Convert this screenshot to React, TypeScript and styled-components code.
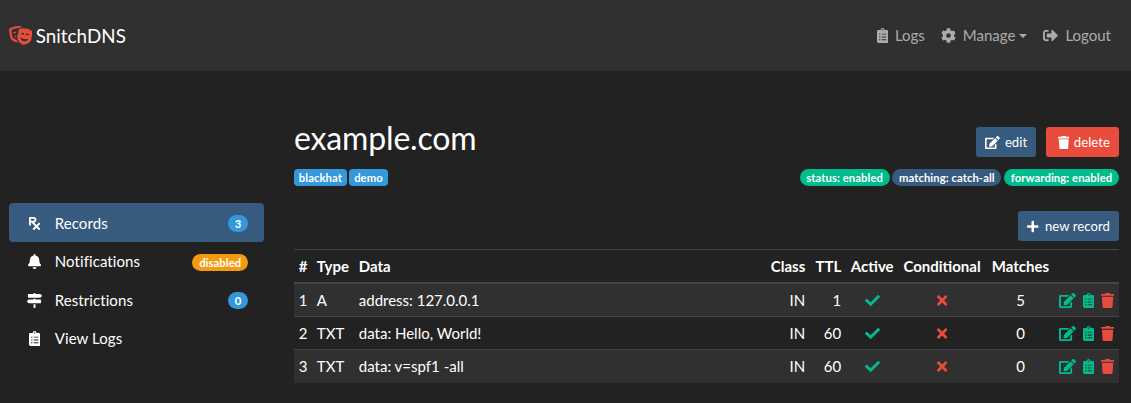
import React from "react";
import styled, { createGlobalStyle } from "styled-components";
import type { IconType } from "react-icons";
import {
  FaTheaterMasks, FaClipboardList, FaCog, FaSignOutAlt, FaPrescription, FaBell,
  FaMapSigns, FaEdit, FaTrash, FaPlus, FaCheck, FaTimes,
} from "react-icons/fa";

const colors = {
  primary: "#375a7f",
  info: "#3498db",
  success: "#00bc8c",
  warning: "#f39c12",
  danger: "#e74c3c",
};
type Tone = keyof typeof colors;

const GlobalStyle = createGlobalStyle`
  *, *::before, *::after { box-sizing: border-box; }
  body {
    margin: 0;
    background: #222;
    color: #fff;
    font: 400 15px/1.5 Lato, "Liberation Sans", sans-serif;
  }
  svg { display: block; flex: none; }
`;

const Page = styled.div`
  min-height: 403px;
  overflow: hidden;
`;

const Navbar = styled.header`
  display: flex;
  align-items: center;
  justify-content: space-between;
  height: 71px;
  padding: 0 20px 0 9px;
  background: #303030;
`;

const Brand = styled.a`
  display: flex;
  align-items: center;
  gap: 3.3px;
  padding-top: 1px;
  font-size: 18.75px;
  letter-spacing: 0.06px;
  svg { color: #e74c3c; margin-top: -1px; }
`;

const Nav = styled.nav`
  display: flex;
  align-items: center;
  gap: 16px;
`;

const NavLink = styled.a<{ $gap: number }>`
  display: flex;
  align-items: center;
  gap: ${(p) => p.$gap}px;
  color: rgba(255, 255, 255, 0.6);
`;

const Caret = styled.span`
  margin-left: -3px;
  border: 4.5px solid transparent;
  border-top-color: currentColor;
  border-bottom: 0;
`;

const Body = styled.div`
  display: flex;
  gap: 30px;
  padding: 0 12px 0 9px;
`;

const Sidebar = styled.aside`
  width: 255px;
  padding-top: 132px;
`;

const SideItem = styled.a<{ $active?: boolean }>`
  display: flex;
  align-items: center;
  height: 38.5px;
  padding: 0 16px;
  border-radius: 4px;
  background: ${(p) => (p.$active ? colors.primary : "transparent")};
`;

const SideIcon = styled.span`
  display: flex;
  justify-content: center;
  width: 18.75px;
  margin-right: 11px;
  padding-top: 1.5px;
`;

const SideLabel = styled.span`
  flex: 1;
  padding-top: 1px;
  letter-spacing: 0.08px;
`;

const Badge = styled.span<{ $tone: Tone; $pill?: boolean }>`
  display: inline-flex;
  align-items: center;
  height: 17px;
  padding: 0 ${(p) => (p.$pill ? "0.6em" : "0.43em")};
  border-radius: ${(p) => (p.$pill ? "10rem" : "4px")};
  background: ${(p) => colors[p.$tone]};
  font-size: 11.25px;
  font-weight: 700;
  letter-spacing: 0.08px;
  line-height: 1;
  white-space: nowrap;
`;

const SideBadge = styled(Badge)`
  margin-top: 3px;
`;

const Main = styled.main`
  flex: 1;
  min-width: 0;
  padding-top: 48px;
`;

const TitleRow = styled.div`
  display: flex;
  justify-content: space-between;
  height: 50px;
`;

const Title = styled.h2`
  margin: 0;
  font-size: 32px;
  font-weight: 400;
  letter-spacing: -0.16px;
  line-height: 38.4px;
`;

const Actions = styled.div`
  display: flex;
  justify-content: flex-end;
  gap: 10px;
  padding-top: 8px;
`;

const Button = styled.button<{ $tone: Tone; $gap?: number; $pad?: number }>`
  display: inline-flex;
  align-items: center;
  gap: ${(p) => p.$gap ?? 4}px;
  height: 30px;
  padding: 1px 9px 0 ${(p) => p.$pad ?? 9}px;
  border: 0;
  border-radius: 3px;
  background: ${(p) => colors[p.$tone]};
  color: #fff;
  font: 400 13.125px/1.5 Lato, sans-serif;
  letter-spacing: 0.07px;
`;

const BadgeRow = styled.div`
  display: flex;
  justify-content: space-between;
  height: 17px;
`;

const BadgeGroup = styled.div`
  display: flex;
  gap: 2.5px;
`;

const RecordActions = styled.div`
  display: flex;
  justify-content: flex-end;
  padding: 25px 0 8px;
`;

const Table = styled.table`
  width: 825px;
  table-layout: fixed;
  border-collapse: separate;
  border-spacing: 0;
`;

const Row = styled.tr<{ $first?: boolean }>`
  height: ${(p) => (p.$first ? 32 : 33)}px;
  &:nth-child(odd) { background: #303030; }
  &:last-child { height: 34px; }
  td { border-top: ${(p) => (p.$first ? "0" : "1px solid #444")}; }
`;

const align = (a?: string) => a ?? "left";

const Head = styled.th<{ $align?: string }>`
  height: 35px;
  padding: 0 4.8px;
  border-top: 1px solid #444;
  border-bottom: 2px solid #444;
  font-weight: 700;
  text-align: ${(p) => align(p.$align)};
`;

const Cell = styled.td<{ $align?: string; $tone?: Tone }>`
  padding: 0 4.8px;
  color: ${(p) => (p.$tone ? colors[p.$tone] : "inherit")};
  text-align: ${(p) => align(p.$align)};
  white-space: nowrap;
  > svg { margin: 0 auto; }
`;

const RowTools = styled.div`
  display: flex;
  align-items: center;
  justify-content: flex-end;
`;

const Tool = styled.a<{ $tone: Tone; $before?: number }>`
  margin-left: ${(p) => p.$before ?? 0}px;
  color: ${(p) => colors[p.$tone]};
`;

/* Solid glyphs keep the em height and take their own aspect ratio. */
function Glyph({ icon: Icon, size = 15, ratio = 1 }: { icon: IconType; size?: number; ratio?: number }) {
  return <Icon style={{ height: size, width: size * ratio }} />;
}

const menu: { icon: IconType; ratio: number; label: string; badge?: string; tone?: Tone }[] = [
  { icon: FaPrescription, ratio: 0.75, label: "Records", badge: "3", tone: "info" },
  { icon: FaBell, ratio: 0.875, label: "Notifications", badge: "disabled", tone: "warning" },
  { icon: FaMapSigns, ratio: 1, label: "Restrictions", badge: "0", tone: "info" },
  { icon: FaClipboardList, ratio: 0.75, label: "View Logs" },
];

const columns: { label: string; width: number; align?: string }[] = [
  { label: "#", width: 18 },
  { label: "Type", width: 42 },
  { label: "Data", width: 412 },
  { label: "Class", width: 44, align: "right" },
  { label: "TTL", width: 36, align: "right" },
  { label: "Active", width: 52, align: "center" },
  { label: "Conditional", width: 88, align: "center" },
  { label: "Matches", width: 69, align: "center" },
  { label: "", width: 64 },
];

const records = [
  { id: 1, type: "A", data: "address: 127.0.0.1", ttl: 1, matches: 5 },
  { id: 2, type: "TXT", data: "data: Hello, World!", ttl: 60, matches: 0 },
  { id: 3, type: "TXT", data: "data: v=spf1 -all", ttl: 60, matches: 0 },
];

export default function App() {
  return (
    <Page>
      <GlobalStyle />
      <Navbar>
        <Brand>
          <Glyph icon={FaTheaterMasks} size={18.75} ratio={1.25} />
          SnitchDNS
        </Brand>
        <Nav>
          <NavLink $gap={7}><Glyph icon={FaClipboardList} ratio={0.75} />Logs</NavLink>
          <NavLink $gap={7}><Glyph icon={FaCog} />Manage<Caret /></NavLink>
          <NavLink $gap={7}><Glyph icon={FaSignOutAlt} />Logout</NavLink>
        </Nav>
      </Navbar>
      <Body>
        <Sidebar>
          {menu.map((m, i) => (
            <SideItem key={m.label} $active={i === 0}>
              <SideIcon><Glyph icon={m.icon} ratio={m.ratio} /></SideIcon>
              <SideLabel>{m.label}</SideLabel>
              {m.badge && <SideBadge $pill $tone={m.tone ?? "info"}>{m.badge}</SideBadge>}
            </SideItem>
          ))}
        </Sidebar>
        <Main>
          <TitleRow>
            <Title>example.com</Title>
            <Actions>
              <Button $tone="primary" $gap={4.7}><Glyph icon={FaEdit} size={13.125} ratio={1.125} />edit</Button>
              <Button $tone="danger" $pad={11.5} $gap={4.5}><Glyph icon={FaTrash} size={13.125} ratio={0.875} />delete</Button>
            </Actions>
          </TitleRow>
          <BadgeRow>
            <BadgeGroup>
              <Badge $tone="info">blackhat</Badge>
              <Badge $tone="info">demo</Badge>
            </BadgeGroup>
            <BadgeGroup>
              <Badge $pill $tone="success">status: enabled</Badge>
              <Badge $pill $tone="primary">matching: catch-all</Badge>
              <Badge $pill $tone="success">forwarding: enabled</Badge>
            </BadgeGroup>
          </BadgeRow>
          <RecordActions>
            <Button $tone="primary" $gap={6}><Glyph icon={FaPlus} size={13.125} ratio={0.875} />new record</Button>
          </RecordActions>
          <Table>
            <colgroup>
              {columns.map((c) => <col key={c.label} style={{ width: c.width }} />)}
            </colgroup>
            <thead>
              <tr>{columns.map((c) => <Head key={c.label} $align={c.align}>{c.label}</Head>)}</tr>
            </thead>
            <tbody>
              {records.map((r, i) => (
                <Row key={r.id} $first={i === 0}>
                  <Cell>{r.id}</Cell>
                  <Cell>{r.type}</Cell>
                  <Cell>{r.data}</Cell>
                  <Cell $align="right">IN</Cell>
                  <Cell $align="right">{r.ttl}</Cell>
                  <Cell $tone="success"><Glyph icon={FaCheck} /></Cell>
                  <Cell $tone="danger"><Glyph icon={FaTimes} ratio={0.6875} /></Cell>
                  <Cell $align="center">{r.matches}</Cell>
                  <Cell>
                    <RowTools>
                      <Tool $tone="success"><Glyph icon={FaEdit} ratio={1.125} /></Tool>
                      <Tool $tone="success" $before={7}><Glyph icon={FaClipboardList} ratio={0.75} /></Tool>
                      <Tool $tone="danger" $before={7}><Glyph icon={FaTrash} ratio={0.875} /></Tool>
                    </RowTools>
                  </Cell>
                </Row>
              ))}
            </tbody>
          </Table>
        </Main>
      </Body>
    </Page>
  );
}
